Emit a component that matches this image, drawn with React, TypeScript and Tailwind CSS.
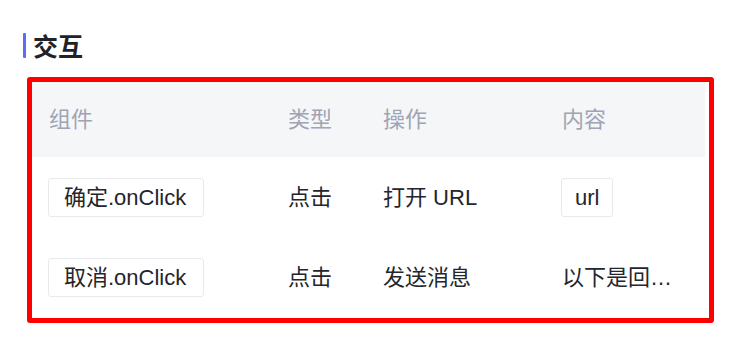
import React from "react";

type Row = {
  component: string;
  type: string;
  action: string;
  content: string;
  contentTag?: boolean;
};

const rows: Row[] = [
  { component: "确定.onClick", type: "点击", action: "打开 URL", content: "url", contentTag: true },
  { component: "取消.onClick", type: "点击", action: "发送消息", content: "以下是回复内容" },
];

function Tag({ children, wide }: { children: React.ReactNode; wide?: boolean }) {
  return (
    <span
      className={
        wide
          ? "inline-flex h-[39px] items-center rounded-[3px] border border-[#e8e9ed] bg-white pl-[15px] pr-[17px]"
          : "inline-flex h-[39px] items-center rounded-[3px] border border-[#e8e9ed] bg-white px-[13px]"
      }
    >
      {children}
    </span>
  );
}

export default function App() {
  return (
    <div
      className="h-[352px] w-[730px] bg-white pt-[33px] pl-[23px]"
      style={{ fontFamily: '"Liberation Sans", "Noto Sans CJK SC", sans-serif' }}
    >
      <div className="flex h-[25px] items-center">
        <div className="h-[25px] w-[3px] rounded-[1px] bg-[#5b6cf5]" />
        <h2
          className="ml-[7px] text-[25px] font-bold leading-none text-[#1f2329]"
          style={{ fontFamily: '"Noto Sans CJK SC", sans-serif' }}
        >
          交互
        </h2>
      </div>

      <div className="mt-[19px] ml-[4px] w-[687px] rounded-[3px] border-[5px] border-[#ff0000] pr-[4px] pb-[1px]">
        <div className="w-[673px] bg-white">
          <div className="flex h-[75px] items-center bg-[#f5f6f8] text-[22px] text-[#a0a4b4]">
            <div className="w-[240px] pl-[17px]">组件</div>
            <div className="w-[95px] pl-[16px]">类型</div>
            <div className="w-[179px] pl-[16px]">操作</div>
            <div className="w-[159px] pl-[16px]">内容</div>
          </div>
          {rows.map((row) => (
            <div key={row.component} className="flex h-[80px] items-center text-[22px] text-[#23262c]">
              <div className="w-[240px] pl-[16px]">
                <Tag wide>{row.component}</Tag>
              </div>
              <div className="w-[95px] pl-[16px]">{row.type}</div>
              <div className="w-[179px] pl-[16px]">{row.action}</div>
              <div className="w-[159px] pl-[15px]">
                {row.contentTag ? (
                  <Tag>{row.content}</Tag>
                ) : (
                  <div className="w-[118px] truncate pl-[1px]">{row.content}</div>
                )}
              </div>
            </div>
          ))}
        </div>
      </div>
    </div>
  );
}
